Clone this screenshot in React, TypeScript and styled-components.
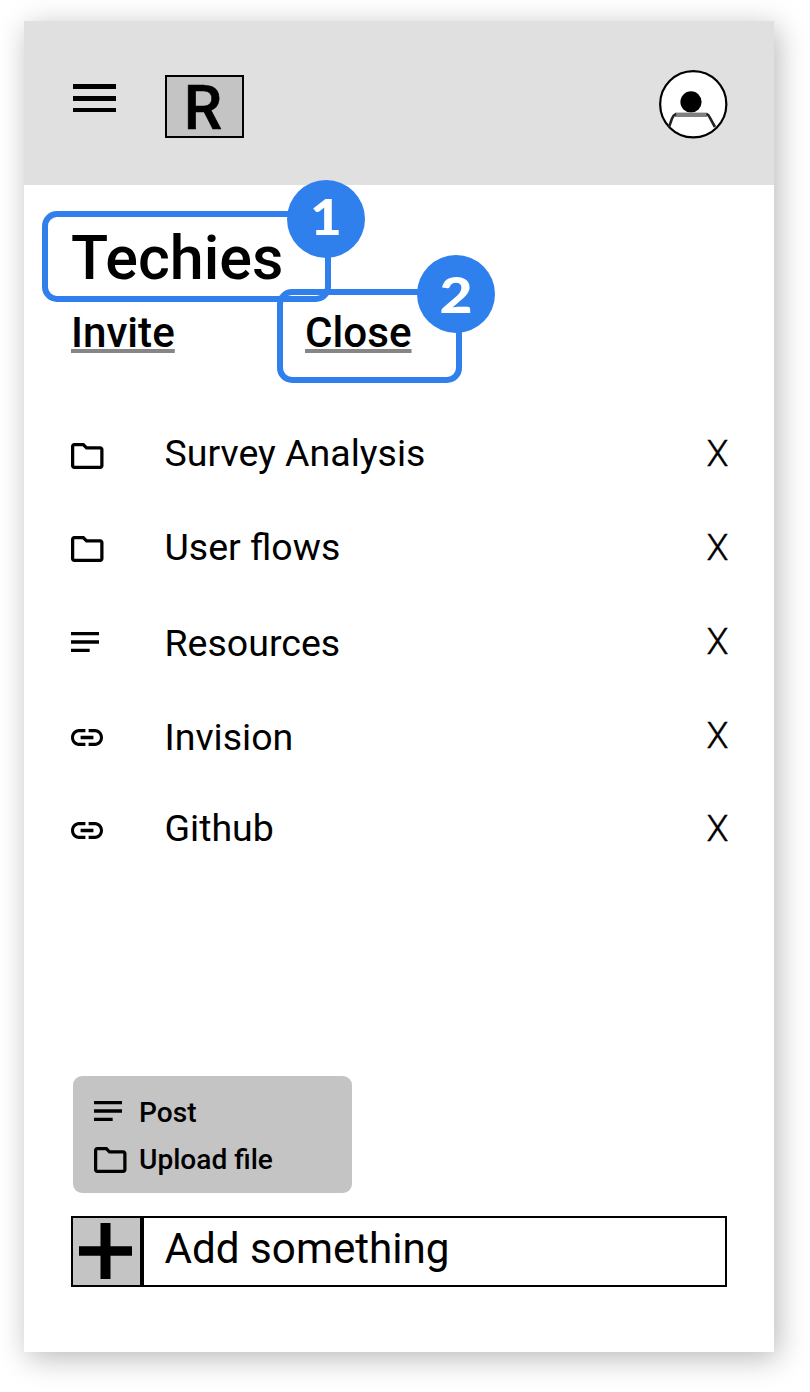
import React from 'react';
import styled, { createGlobalStyle } from 'styled-components';

const GlobalStyle = createGlobalStyle`
  * { box-sizing: border-box; }
  body {
    margin: 0;
    background: #fff;
    color: #000;
    font-family: Roboto, 'Liberation Sans', sans-serif;
  }
`;

const Page = styled.div`
  height: 1392px;
  padding: 21px 36px 40px 24px;
  overflow: hidden;
`;

const Card = styled.div`
  position: relative;
  display: flex;
  flex-direction: column;
  width: 750px;
  height: 1331px;
  background: #fff;
  box-shadow: 4px 6px 28px rgba(0, 0, 0, 0.28);
`;

const Header = styled.header`
  display: flex;
  align-items: flex-start;
  height: 164px;
  padding: 49px 46.5px 0 49px;
  background: #e0e0e0;
`;

const MenuButton = styled.button`
  display: flex;
  flex-direction: column;
  gap: 7px;
  width: 43px;
  margin: 14px 48.5px 0 0;
  padding: 0;
  border: 0;
  background: none;
`;

const MenuBar = styled.span`
  height: 4.8px;
  background: #000;
`;

const Logo = styled.div`
  width: 79.5px;
  height: 63.5px;
  margin: 4.5px auto 0 0;
  padding: 1px 2.5px 0 0;
  border: 2.3px solid #000;
  background: #c4c4c4;
  font-size: 61px;
  font-weight: 500;
  line-height: 60px;
  text-align: center;
  -webkit-text-stroke: 0.6px #000;
`;

const Main = styled.main`
  display: flex;
  flex: 1;
  flex-direction: column;
  padding: 37px 47px 65.5px;
`;

const Title = styled.h1`
  margin: 0;
  font-size: 61px;
  font-weight: 500;
  line-height: 72px;
`;

const Actions = styled.div`
  display: grid;
  grid-template-columns: 234px auto;
  justify-content: start;
  margin-top: 14px;
`;

const Action = styled.a`
  justify-self: start;
  font-size: 42.2px;
  font-weight: 500;
  line-height: 50px;
  text-decoration: underline 4px #868686;
  text-decoration-skip-ink: none;
  text-underline-offset: 2px;
`;

const List = styled.ul`
  margin: 73px 0 0;
  padding: 0;
  list-style: none;
`;

const Row = styled.li`
  display: grid;
  grid-template-columns: 93.5px 1fr auto;
  align-items: start;
  height: 93.75px;
`;

const RowIcon = styled.span<{ $top: number }>`
  display: flex;
  margin-top: ${(p) => p.$top}px;
`;

const RowLabel = styled.span<{ $top: number }>`
  margin-top: ${(p) => p.$top}px;
  font-size: 37.5px;
  line-height: 44px;
`;

const Remove = styled.button`
  margin: 1.3px -1.5px 0 0;
  padding: 0;
  border: 0;
  background: none;
  color: #000;
  font: 300 36px/44px Roboto, sans-serif;
  -webkit-text-stroke: 0.4px #000;
`;

const Popup = styled.div`
  width: 279px;
  height: 117px;
  margin: auto 0 23.5px 2px;
  padding: 14px 21px;
  border-radius: 9px;
  background: #c4c4c4;
`;

const PopupItem = styled.div<{ $lift?: number }>`
  display: grid;
  grid-template-columns: 45px auto;
  align-items: center;
  justify-content: start;
  height: 46.8px;
  font-size: 28.1px;
  font-weight: 500;
  svg { display: block; margin-bottom: ${(p) => p.$lift ?? 0}px; }
`;

const AddBar = styled.div`
  display: flex;
  height: 70.5px;
  border: 2.4px solid #000;
`;

const AddButton = styled.button`
  display: flex;
  align-items: center;
  justify-content: center;
  width: 70.5px;
  padding: 0 3.5px 0 1px;
  border: 0;
  border-right: 4.5px solid #000;
  background: #c4c4c4;
`;

const AddText = styled.span`
  padding-left: 21px;
  font-size: 42.2px;
  line-height: 62px;
`;

const Highlight = styled.div<{ $x: number; $y: number; $w: number; $h: number }>`
  position: absolute;
  left: ${(p) => p.$x}px;
  top: ${(p) => p.$y}px;
  width: ${(p) => p.$w}px;
  height: ${(p) => p.$h}px;
  border: 6px solid #2f80ed;
  border-radius: 15px;
`;

const Badge = styled.div<{ $x: number; $y: number }>`
  position: absolute;
  left: ${(p) => p.$x}px;
  top: ${(p) => p.$y}px;
  width: 78px;
  height: 78px;
  border-radius: 50%;
  background: #2f80ed;
  color: #fff;
  font: 900 50px/73px Lato, sans-serif;
  text-align: center;
`;

const Digit = styled.span<{ $drop: number; $stretch: number }>`
  display: block;
  padding-top: ${(p) => p.$drop}px;
  transform: scaleX(${(p) => p.$stretch});
`;

const FolderIcon = () => (
  <svg width="32.5" height="26" viewBox="2 4 20 16" preserveAspectRatio="none">
    <path d="M9.17 6l2 2H20v10H4V6h5.17M10 4H4c-1.1 0-1.99.9-1.99 2L2 18c0 1.1.9 2 2 2h16c1.1 0 2-.9 2-2V8c0-1.1-.9-2-2-2h-8l-2-2z" />
  </svg>
);

const NotesIcon = () => (
  <svg width="28" height="20" viewBox="3 6 18 12" preserveAspectRatio="none">
    <path d="M3 18h12v-2H3v2zM3 6v2h18V6H3zm0 7h18v-2H3v2z" />
  </svg>
);

const LinkIcon = () => (
  <svg width="32" height="17" viewBox="2 7 20 10" preserveAspectRatio="none">
    <path d="M3.9 12c0-1.71 1.39-3.1 3.1-3.1h4V7H7c-2.76 0-5 2.24-5 5s2.24 5 5 5h4v-1.9H7c-1.71 0-3.1-1.39-3.1-3.1zM8 13h8v-2H8v2zm9-6h-4v1.9h4c1.71 0 3.1 1.39 3.1 3.1s-1.39 3.1-3.1 3.1h-4V17h4c2.76 0 5-2.24 5-5s-2.24-5-5-5z" />
  </svg>
);

const Avatar = () => (
  <svg width="68.5" height="68.5" viewBox="0 0 68.5 68.5">
    <circle cx="34.25" cy="34.25" r="33.1" fill="#fff" stroke="#000" strokeWidth="2.2" />
    <circle cx="32" cy="31.9" r="10.6" />
    <path d="M16 44.8H48" stroke="#808080" strokeWidth="4.4" />
    <path d="M10 57L13 48.5Q14.3 45 17 43.9M47.5 43.9Q49.8 45 51 48L56 57" stroke="#222" strokeWidth="2.6" fill="none" />
  </svg>
);

const PlusIcon = () => (
  <svg width="53" height="56" viewBox="0 0 53 56">
    <path d="M21.5 0h10v23.2H53v9.6H31.5V56h-10V32.8H0v-9.6h21.5z" />
  </svg>
);

const icons = { folder: FolderIcon, notes: NotesIcon, link: LinkIcon };

const items: { label: string; icon: keyof typeof icons; iconTop: number; labelTop: number }[] = [
  { label: 'Survey Analysis', icon: 'folder', iconTop: 11.5, labelTop: 0 },
  { label: 'User flows', icon: 'folder', iconTop: 10.8, labelTop: 0 },
  { label: 'Resources', icon: 'notes', iconTop: 13.5, labelTop: 2.5 },
  { label: 'Invision', icon: 'link', iconTop: 17, labelTop: 2.5 },
  { label: 'Github', icon: 'link', iconTop: 16, labelTop: 0 },
];

export default function App() {
  return (
    <Page>
      <GlobalStyle />
      <Card>
        <Header>
          <MenuButton aria-label="Menu">
            <MenuBar />
            <MenuBar />
            <MenuBar />
          </MenuButton>
          <Logo>R</Logo>
          <Avatar />
        </Header>
        <Main>
          <Title>Techies</Title>
          <Actions>
            <Action>Invite</Action>
            <Action>Close</Action>
          </Actions>
          <List>
            {items.map(({ label, icon, iconTop, labelTop }) => {
              const Icon = icons[icon];
              return (
                <Row key={label}>
                  <RowIcon $top={iconTop}>
                    <Icon />
                  </RowIcon>
                  <RowLabel $top={labelTop}>{label}</RowLabel>
                  <Remove>X</Remove>
                </Row>
              );
            })}
          </List>
          <Popup>
            <PopupItem $lift={3}>
              <NotesIcon />
              Post
            </PopupItem>
            <PopupItem>
              <FolderIcon />
              Upload file
            </PopupItem>
          </Popup>
          <AddBar>
            <AddButton aria-label="Add">
              <PlusIcon />
            </AddButton>
            <AddText>Add something</AddText>
          </AddBar>
        </Main>
        <Highlight $x={18} $y={190} $w={289} $h={91} />
        <Highlight $x={252.5} $y={268} $w={185} $h={94} />
        <Badge $x={263} $y={159}>
          <Digit $drop={0} $stretch={1.1}>1</Digit>
        </Badge>
        <Badge $x={393.3} $y={234.3}>
          <Digit $drop={2.5} $stretch={1.14}>2</Digit>
        </Badge>
      </Card>
    </Page>
  );
}
